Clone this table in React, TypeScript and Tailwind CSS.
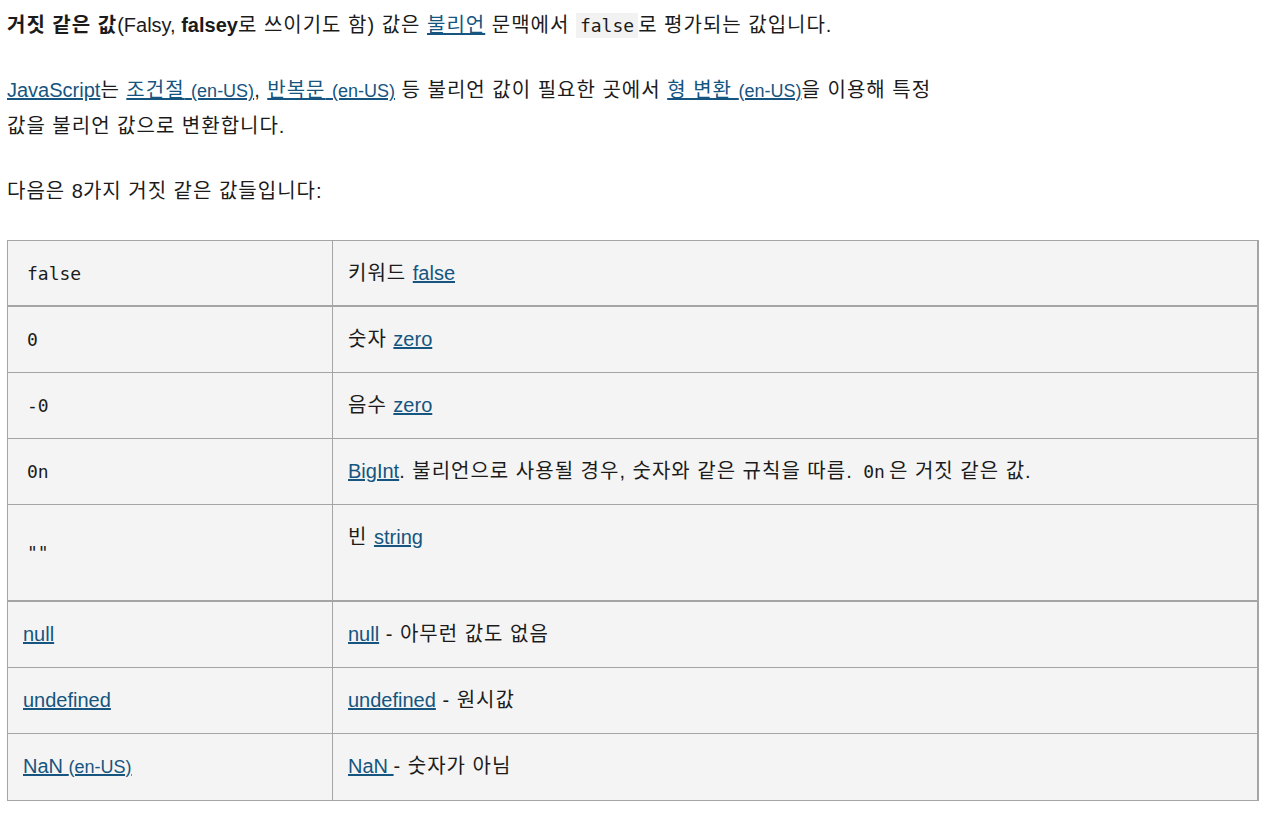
import type { ReactNode } from 'react'

const link = 'text-[#15557f] underline'
const mono = "font-['DejaVu_Sans_Mono',monospace] text-[18px] tracking-normal"

// Hangul in the reference runs wider than Noto CJK, so Korean gets a little tracking
function A({ children, ko }: { children: ReactNode; ko?: boolean }) {
  return <a className={`${link} ${ko ? '' : 'tracking-normal'}`}>{children}</a>
}

function L({ children }: { children: ReactNode }) {
  return <span className="tracking-normal">{children}</span>
}

function EnUS({ label, ko }: { label: string; ko?: boolean }) {
  return (
    <a className={`${link} ${ko ? '' : 'tracking-normal'}`}>
      {label} <span className="text-[18px] tracking-normal">(en-US)</span>
    </a>
  )
}

function Code({ children, bg }: { children: ReactNode; bg?: boolean }) {
  return <code className={`${mono} px-[4px] py-[2px] ${bg ? 'bg-[#f2f2f2]' : ''}`}>{children}</code>
}

type Row = { left: ReactNode; right: ReactNode; tall?: boolean; thick?: boolean }

const rows: Row[] = [
  { left: <Code>false</Code>, right: <>키워드 <A>false</A></>, thick: true },
  { left: <Code>0</Code>, right: <>숫자 <A>zero</A></> },
  { left: <Code>-0</Code>, right: <>음수 <A>zero</A></> },
  {
    left: <Code>0n</Code>,
    right: (
      <>
        <A>BigInt</A>. 불리언으로 사용될 경우, 숫자와 같은 규칙을 따름. <Code>0n</Code>은 거짓 같은 값.
      </>
    ),
  },
  { left: <Code>""</Code>, right: <>빈 <A>string</A></>, tall: true, thick: true },
  { left: <A>null</A>, right: <><A>null</A> - 아무런 값도 없음</> },
  { left: <A>undefined</A>, right: <><A>undefined</A> - 원시값</> },
  { left: <EnUS label="NaN" />, right: <><A>NaN </A>- 숫자가 아님</> },
]

export default function App() {
  return (
    <div className="min-h-[832px] bg-white px-[7px] pt-[8px] text-[20px] leading-[35px] tracking-[1px] text-[#1b1b1b] font-['Liberation_Sans','Noto_Sans_CJK_KR',sans-serif]">
      <p>
        <b>거짓 같은 값</b>
        <L>(Falsy, </L>
        <b className="tracking-normal">falsey</b>로 쓰이기도 함) 값은 <A ko>불리언</A> 문맥에서 <Code bg>false</Code>로
        평가되는 값입니다.
      </p>
      <p className="mt-[30px]">
        <A>JavaScript</A>는 <EnUS ko label="조건절" />, <EnUS ko label="반복문" /> 등 불리언 값이 필요한 곳에서{' '}
        <EnUS ko label="형 변환" />을 이용해 특정
        <br />
        값을 불리언 값으로 변환합니다.
      </p>
      <p className="mt-[30px]">
        다음은 <L>8</L>가지 거짓 같은 값들입니다:
      </p>

      <table className="mt-[31px] w-[1252px] border-collapse border-r-2 border-[#a5a5a5] bg-[#f4f4f4]">
        <tbody>
          {rows.map((r, i) => (
            <tr
              key={i}
              className={`border-x border-[#a5a5a5] ${i === 0 ? 'border-t' : ''} ${r.thick ? 'border-b-2' : 'border-b'}`}
            >
              <td
                className={`w-[325px] border-r border-[#a5a5a5] px-[15px] align-middle ${i === 0 ? 'pt-[15px] pb-[14px]' : 'py-[15px]'}`}
              >
                {r.left}
              </td>
              <td
                className={`border-r-2 border-[#a5a5a5] px-[15px] align-top ${i === 0 ? 'pt-[15px] pb-[14px]' : 'py-[15px]'}`}
              >
                {r.tall ? <p className="mb-[30px]">{r.right}</p> : r.right}
              </td>
            </tr>
          ))}
        </tbody>
      </table>
    </div>
  )
}
